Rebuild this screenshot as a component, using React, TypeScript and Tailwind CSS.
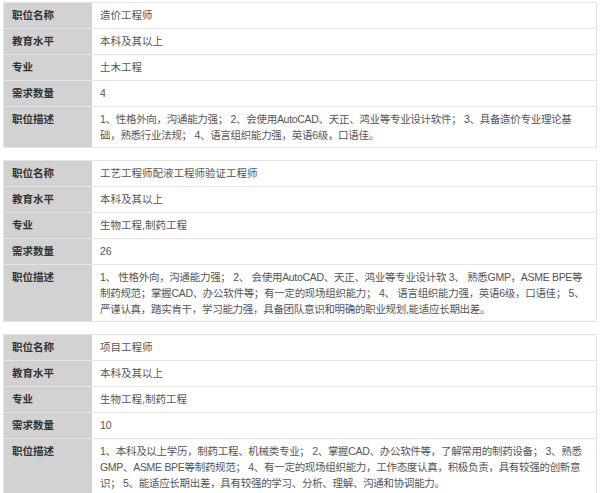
const tables = [
  {
    name: "造价工程师",
    edu: "本科及其以上",
    major: "土木工程",
    count: "4",
    desc: "1、性格外向，沟通能力强； 2、会使用AutoCAD、天正、鸿业等专业设计软件； 3、具备造价专业理论基础，熟悉行业法规； 4、语言组织能力强，英语6级，口语佳。",
  },
  {
    name: "工艺工程师配液工程师验证工程师",
    edu: "本科及其以上",
    major: "生物工程,制药工程",
    count: "26",
    desc: "1、 性格外向，沟通能力强； 2、 会使用AutoCAD、天正、鸿业等专业设计软 3、 熟悉GMP，ASME BPE等制药规范；掌握CAD、办公软件等；有一定的现场组织能力； 4、 语言组织能力强，英语6级，口语佳； 5、 严谨认真，踏实肯干，学习能力强，具备团队意识和明确的职业规划,能适应长期出差。",
  },
  {
    name: "项目工程师",
    edu: "本科及其以上",
    major: "生物工程,制药工程",
    count: "10",
    desc: "1、本科及以上学历，制药工程、机械类专业； 2、掌握CAD、办公软件等，了解常用的制药设备； 3、熟悉GMP、ASME BPE等制药规范； 4、有一定的现场组织能力，工作态度认真，积极负责，具有较强的创新意识； 5、能适应长期出差，具有较强的学习、分析、理解、沟通和协调能力。",
  },
];

function Row({ label, value, tall }: { label: string; value: string; tall?: boolean }) {
  return (
    <div className="flex border-t border-[#e4e4e4] first:border-t-0">
      <div className={`w-[88px] shrink-0 bg-[#d2d2d2] px-[8px] font-bold text-[#333] ${tall ? "pt-[5px]" : "flex items-center"}`}>
        {label}
      </div>
      <div className={`flex-1 bg-white px-[8px] text-[#555] ${tall ? "py-[4px] leading-[16px] tracking-[-0.3px]" : "flex h-[25px] items-center"}`}>
        {value}
      </div>
    </div>
  );
}

export default function App() {
  return (
    <div
      className="flex w-[600px] flex-col gap-[12px] bg-white px-[3px] pt-[2px] text-[10.5px]"
      style={{ fontFamily: '"Liberation Sans", "Noto Sans CJK SC", sans-serif' }}
    >
      {tables.map((t) => (
        <div key={t.name} className="border border-[#e4e4e4]">
          <Row label="职位名称" value={t.name} />
          <Row label="教育水平" value={t.edu} />
          <Row label="专业" value={t.major} />
          <Row label="需求数量" value={t.count} />
          <Row label="职位描述" value={t.desc} tall />
        </div>
      ))}
    </div>
  );
}
